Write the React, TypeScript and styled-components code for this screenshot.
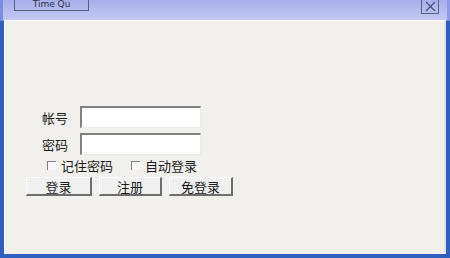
import React from "react";
import styled, { createGlobalStyle } from "styled-components";

const Global = createGlobalStyle`
  html, body { margin: 0; padding: 0; width: 450px; height: 258px; overflow: hidden; background: #2f5fbf; }
  * { box-sizing: border-box; }
`;

const Window = styled.div`
  width: 450px;
  height: 258px;
  display: flex;
  flex-direction: column;
  background: linear-gradient(180deg, #a9b1ec 0px, #bcc2f2 20px, #2f5fbf 21px);
  padding: 0 4px 4px 4px;
  font-family: "Noto Sans CJK SC", "Liberation Sans", sans-serif;
`;

const TitleBar = styled.div`
  height: 20px;
  display: flex;
  align-items: flex-start;
  justify-content: space-between;
  padding: 0 8px 0 11px;
  background: linear-gradient(180deg, #a7afeb, #c3c8f4);
  margin: 0 -4px;
  border-left: 3px solid #7d8fe0;
  border-right: 3px solid #8e9ae6;
`;

const TabButton = styled.div`
  width: 75px;
  height: 11px;
  border: 1px solid #5a5f80;
  border-top: none;
  display: flex;
  align-items: center;
  justify-content: center;
  font-family: "DejaVu Sans", sans-serif;
  font-size: 9px;
  color: #303048;
  line-height: 1;
  padding-bottom: 1px;
`;

const CloseButton = styled.div`
  width: 18px;
  height: 14px;
  border: 1px solid #5a5f80;
  border-top: none;
  display: flex;
  align-items: center;
  justify-content: center;
`;

const Client = styled.div`
  flex: 1;
  background: #f1f0ed;
  border-left: 1px solid #ffffff;
  border-top: 1px solid #fbfbfb;
  border-right: 2px solid #dde6f6;
  display: flex;
  flex-direction: column;
  padding: 85px 0 0 21px;
`;

const Row = styled.div`
  display: flex;
  align-items: center;
  height: 22px;
  margin-bottom: 5px;
  padding-left: 15px;
`;

const Label = styled.span`
  width: 39px;
  font-size: 13px;
  color: #1a1a1a;
  padding-left: 1px;
`;

const Input = styled.div`
  width: 121px;
  height: 22px;
  background: #ffffff;
  border-top: 2px solid #808080;
  border-left: 2px solid #808080;
  border-right: 1px solid #e8e8e8;
  border-bottom: 1px solid #e8e8e8;
`;

const CheckRow = styled.div`
  display: flex;
  align-items: center;
  height: 16px;
  margin-top: -3px;
  padding-left: 21px;
  gap: 18px;
`;

const Check = styled.label`
  display: flex;
  align-items: center;
  gap: 5px;
  font-size: 13px;
  color: #1a1a1a;
`;

const Box = styled.span`
  width: 9px;
  height: 9px;
  border-top: 1px solid #808080;
  border-left: 1px solid #808080;
  background: #f8f8f8;
`;

const ButtonRow = styled.div`
  display: flex;
  gap: 7px;
  margin-top: 4px;
`;

const Button = styled.div<{ $w: number }>`
  width: ${(p) => p.$w}px;
  height: 19px;
  background: #f0f0f0;
  border-top: 1px solid #ffffff;
  border-left: 1px solid #ffffff;
  border-right: 2px solid #6e6e6e;
  border-bottom: 2px solid #6e6e6e;
  display: flex;
  align-items: center;
  justify-content: center;
  font-size: 13px;
  line-height: 1;
  color: #1a1a1a;
`;

export default function App() {
  return (
    <>
      <Global />
      <Window>
        <TitleBar>
          <TabButton>Time Qu</TabButton>
          <CloseButton>
            <svg width="11" height="11" viewBox="0 0 11 11">
              <path d="M1 1 L10 10 M10 1 L1 10" stroke="#4a4f70" strokeWidth="1.2" />
            </svg>
          </CloseButton>
        </TitleBar>
        <Client>
          <Row>
            <Label>帐号</Label>
            <Input />
          </Row>
          <Row>
            <Label>密码</Label>
            <Input />
          </Row>
          <CheckRow>
            <Check><Box />记住密码</Check>
            <Check><Box />自动登录</Check>
          </CheckRow>
          <ButtonRow>
            <Button $w={66}>登录</Button>
            <Button $w={63}>注册</Button>
            <Button $w={64}>免登录</Button>
          </ButtonRow>
        </Client>
      </Window>
    </>
  );
}
